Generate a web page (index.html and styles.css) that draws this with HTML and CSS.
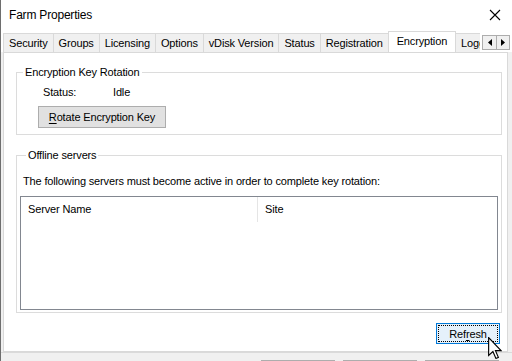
FILE: index.html
```html
<!DOCTYPE html>
<html lang="en">
<head>
  <meta charset="UTF-8" />
  <title>Farm Properties</title>
  <link rel="stylesheet" href="styles.css">
</head>
<body>
  <div class="window">
    <div class="titlebar">
      <span class="title">Farm Properties</span>
      <svg class="close" width="12" height="12" viewBox="0 0 12 12">
        <path d="M1 1 L11 11 M11 1 L1 11" stroke="#000" stroke-width="1.1" fill="none"/>
      </svg>
    </div>

    <div class="tabstrip">
      <div class="tabs">
        <div class="tab">Security</div>
        <div class="tab">Groups</div>
        <div class="tab">Licensing</div>
        <div class="tab">Options</div>
        <div class="tab">vDisk Version</div>
        <div class="tab">Status</div>
        <div class="tab">Registration</div>
        <div class="tab active">Encryption</div>
        <div class="tab">Logging</div>
      </div>
      <div class="scroller">
        <div class="arrow">
          <svg width="4" height="7" viewBox="0 0 4 7"><path d="M4 0 L0 3.5 L4 7 Z" fill="#000"/></svg>
        </div>
        <div class="arrow">
          <svg width="4" height="7" viewBox="0 0 4 7"><path d="M0 0 L4 3.5 L0 7 Z" fill="#000"/></svg>
        </div>
      </div>
    </div>

    <div class="panel">
      <fieldset class="group rotation">
        <legend>Encryption Key Rotation</legend>
        <div class="rotation-body">
          <div class="status-row">
            <span class="label">Status:</span>
            <span>Idle</span>
          </div>
          <button class="btn rotate"><u>R</u>otate Encryption Key</button>
        </div>
      </fieldset>

      <fieldset class="group offline">
        <legend>Offline servers</legend>
        <p class="note">The following servers must become active in order to complete key rotation:</p>
        <div class="listview">
          <div class="list-header">
            <div class="col col-name">Server Name</div>
            <div class="col col-site">Site</div>
          </div>
        </div>
      </fieldset>

      <div class="actions">
        <button class="btn refresh"><span class="focus">Ref<u>r</u>esh</span></button>
        <svg class="cursor" width="14" height="22" viewBox="0 0 12 19">
          <path d="M0.5 0.5 L0.5 16 L4.2 12.6 L6.8 18.5 L8.9 17.6 L6.4 11.8 L11.2 11.8 Z" fill="#fff" stroke="#000" stroke-width="1" stroke-linejoin="miter"/>
        </svg>
      </div>
    </div>

    <div class="footer">
      <div class="fbtn"></div>
      <div class="fbtn"></div>
      <div class="fbtn"></div>
    </div>
  </div>
</body>
</html>
```

FILE: styles.css
```css
* {
  box-sizing: border-box;
}

body {
  margin: 0;
  width: 512px;
  height: 361px;
  overflow: hidden;
  background: #f0f0f0;
  font-family: "Liberation Sans", Arial, sans-serif;
  font-size: 11px;
  letter-spacing: -0.15px;
  color: #000;
}

.window {
  height: 361px;
  border-left: 1px solid #6e6e6e;
  display: flex;
  flex-direction: column;
}

.titlebar {
  height: 31px;
  background: #fff;
  display: flex;
  align-items: center;
  justify-content: space-between;
  padding: 0 11px 1px 8px;
}

.title {
  font-size: 12px;
  letter-spacing: -0.2px;
}

/* tab strip */
.tabstrip {
  height: 21px;
  background: #fff;
  display: flex;
  align-items: flex-end;
  padding-left: 2px;
}

.tabs {
  display: flex;
  align-items: flex-end;
  width: 477px;
  overflow: hidden;
  height: 21px;
}

.tab {
  height: 19px;
  line-height: 18px;
  padding: 0 5px;
  background: #f0f0f0;
  border: 1px solid #d9d9d9;
  border-bottom: none;
  margin-right: -1px;
  white-space: nowrap;
  flex-shrink: 0;
}

.tab.active {
  height: 22px;
  line-height: 18px;
  background: #fff;
  padding: 0 8px;
  position: relative;
  z-index: 1;
  margin: 0 -1px -1px 0;
}

.scroller {
  display: flex;
  margin: 0 0 2px 2px;
  border: 1px solid #adadad;
  background: #f0f0f0;
  height: 15px;
}

.arrow {
  width: 13px;
  display: flex;
  align-items: center;
  justify-content: center;
}

.arrow + .arrow {
  border-left: 1px solid #adadad;
}

/* page area */
.panel {
  height: 300px;
  margin: 0 4px 0 2px;
  background: #fff;
  border: 1px solid #d9d9d9;
  padding: 12px 5px 0 12px;
  display: flex;
  flex-direction: column;
}

.group {
  margin: 0;
  border: 1px solid #dcdcdc;
  padding: 0;
  min-width: 0;
}

.group legend {
  padding: 0 2px;
  margin-left: 6px;
  line-height: 14px;
}

.rotation {
  height: 70px;
}

.rotation-body {
  padding-left: 21px;
}

.status-row {
  display: flex;
  margin: 6px 0 0 5px;
  line-height: 14px;
}

.status-row .label {
  width: 70px;
}

.btn {
  font-family: inherit;
  font-size: 11px;
  letter-spacing: -0.15px;
  color: #000;
  background: #e1e1e1;
  border: 1px solid #adadad;
  border-radius: 0;
  padding: 0;
}

.btn u {
  text-decoration-thickness: 1px;
  text-underline-offset: 2px;
}

.rotate {
  margin-top: 7px;
  width: 128px;
  height: 22px;
}

.offline {
  margin-top: 13px;
  padding: 0 3px 2px;
}

.note {
  margin: 12px 0 8px 3px;
  line-height: 14px;
}

.listview {
  border: 1px solid #828790;
  height: 114px;
}

.list-header {
  display: flex;
  height: 25px;
}

.col {
  padding: 6px 0 0 7px;
}

.col-name {
  width: 237px;
  border-right: 1px solid #e5e5e5;
}

.actions {
  display: flex;
  justify-content: flex-end;
  padding: 10px 2px 0 0;
  position: relative;
}

.refresh {
  width: 64px;
  height: 21px;
  background: #e5f1fb;
  border: 1px solid #0078d7;
  padding: 1px;
}

.focus {
  display: block;
  height: 100%;
  line-height: 16px;
  border: 1px dotted #000;
}

.cursor {
  position: absolute;
  left: 472px;
  top: 24px;
}

/* dialog buttons peeking at the bottom */
.footer {
  flex: 1;
  display: flex;
  justify-content: flex-end;
  align-items: flex-end;
  gap: 8px;
  padding-right: 13px;
  border-top: 1px solid #dadada;
}

.fbtn {
  width: 74px;
  height: 1px;
  border-top: 1px solid #adadad;
}
```
